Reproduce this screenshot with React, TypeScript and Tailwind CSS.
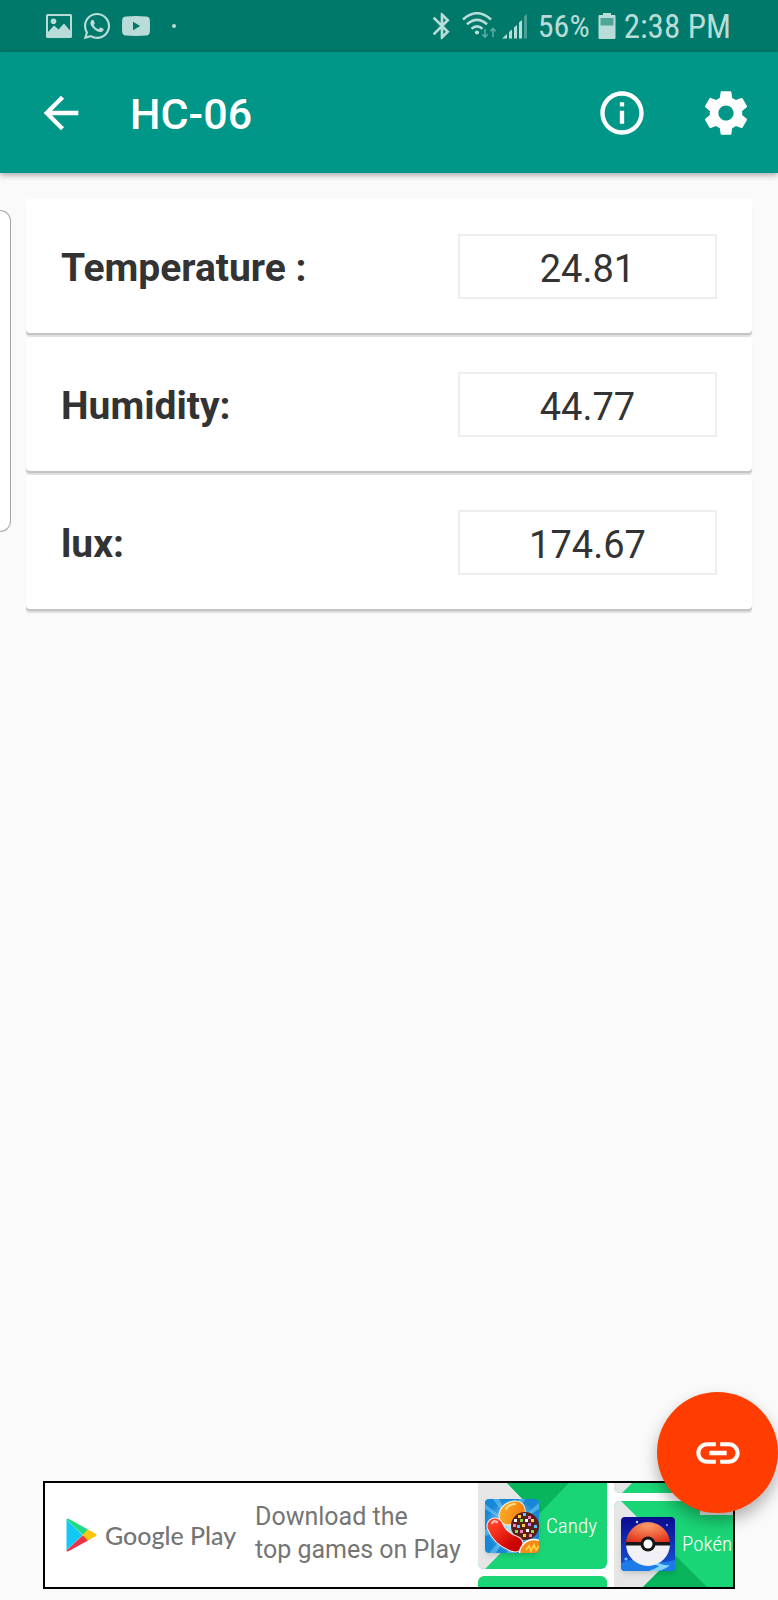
import React from "react";
import { MdArrowBack, MdBluetooth, MdInfoOutline, MdLink } from "react-icons/md";
import { FaWhatsapp } from "react-icons/fa";

const readings = [
  { id: "temperature", label: "Temperature :", value: "24.81" },
  { id: "humidity", label: "Humidity:", value: "44.77" },
  { id: "lux", label: "lux:", value: "174.67" },
];

function PhotoIcon() {
  return (
    <svg width="26" height="24" viewBox="0 0 26 24" fill="currentColor">
      <path
        fillRule="evenodd"
        d="M1.5 0h23A1.5 1.5 0 0 1 26 1.500v21a1.500 1.500 0 0 1-1.500 1.500h-23A1.500 1.500 0 0 1 0 22.500v-21A1.500 1.500 0 0 1 1.500 0zM2 2v16l6-6.500 4.500 4 5.500-6 6 7V2z"
      />
      <circle cx="7.500" cy="7.200" r="2.800" />
    </svg>
  );
}

function VideoIcon() {
  return (
    <svg width="28" height="20" viewBox="0 0 28 20" fill="currentColor">
      <path
        fillRule="evenodd"
        d="M4 .4Q14-.4 24 .4q3.600.2 3.800 3.600.4 6 0 12-.2 3.400-3.800 3.600-10 .8-20 0Q.4 19.400.2 16q-.4-6 0-12Q.4.600 4 .4zM11 5.800v8.400l7.200-4.200z"
      />
    </svg>
  );
}

function WifiIcon() {
  return (
    <svg width="36" height="28" viewBox="0 0 36 28" fill="none" stroke="currentColor">
      <g strokeWidth="2.600">
        <path d="M1 7.500Q15-5 29 7.500" />
        <path d="M5 12.300Q15 3.500 25 12.300" />
        <path d="M9.500 16.800Q15 12 20.500 16.800" />
      </g>
      <circle cx="15" cy="20.500" r="2.100" fill="currentColor" stroke="none" />
      <g strokeWidth="1.600" opacity=".5">
        <path d="M23 17v8M20.300 22.300l2.700 2.900 2.700-2.900" />
        <path d="M31 25v-8.500M28.300 19.200l2.700-2.900 2.700 2.900" />
      </g>
    </svg>
  );
}

function SignalIcon() {
  return (
    <svg width="26" height="26" viewBox="0 0 26 26" fill="currentColor">
      <path d="M0 25.500l5-4.500v4.500z" />
      <path d="M7 19l3-2.500v9H7z" />
      <path d="M12 14.500l3-2.500v13.500h-3z" />
      <path d="M17 9.500l3-2.500v18.500h-3z" />
      <path opacity=".4" d="M22 3.500L25 .8v24.700h-3z" />
    </svg>
  );
}

function BatteryIcon() {
  return (
    <svg width="18" height="26" viewBox="0 0 18 26" fill="currentColor">
      <path d="M5 0h8v2h3.500q1 0 1 1v22q0 1-1 1h-15q-1 0-1-1V3q0-1 1-1H5z" />
      <path d="M2.500 5h13v7.500h-13z" fill="#4fa598" />
    </svg>
  );
}

function GearIcon() {
  return (
    <svg width="52" height="52" viewBox="0 0 24 24" fill="currentColor">
      <path d="M19.43 12.98c.04-.32.07-.64.07-.98s-.03-.66-.07-.98l2.11-1.65c.19-.15.24-.42.12-.64l-2-3.46c-.12-.22-.39-.3-.61-.22l-2.49 1c-.52-.4-1.08-.73-1.69-.98l-.38-2.65C14.46 2.18 14.25 2 14 2h-4c-.25 0-.46.18-.49.42l-.38 2.65c-.61.25-1.17.59-1.69.98l-2.49-1c-.23-.09-.49 0-.61.22l-2 3.46c-.13.22-.07.49.12.64l2.110 1.650c-.04.32-.07.65-.07.98s.03.66.07.98l-2.110 1.650c-.19.15-.24.42-.12.64l2 3.460c.12.22.39.3.61.22l2.490-1c.52.4 1.080.73 1.690.98l.38 2.650c.03.24.24.42.49.42h4c.25 0 .46-.18.49-.42l.38-2.650c.61-.25 1.170-.59 1.690-.98l2.490 1c.23.09.49 0 .61-.22l2-3.460c.12-.22.07-.49-.12-.64l-2.110-1.650zM12 15.500c-1.930 0-3.500-1.570-3.500-3.500s1.570-3.500 3.500-3.500 3.500 1.570 3.500 3.500-1.570 3.500-3.500 3.500z" />
    </svg>
  );
}

function PlayLogo() {
  return (
    <svg width="31" height="34" viewBox="0 0 31 34" className="shrink-0">
      <path d="M.5 1.500v31L16.500 17z" fill="#12c8f5" />
      <path d="M.5 1.500Q1 0 3 1l19 10.500L17 17z" fill="#1edb82" />
      <path d="M.5 32.500Q1 34 3 33l19-10.500L17 17z" fill="#ef3347" />
      <path d="M22 11.500l8 4.500q1 1 0 2l-8 4.500-5.500-5.500z" fill="#fdc50e" />
    </svg>
  );
}

const sprinkles: [number, number, string][] = [
  [34, 17, "#ffd23f"], [39, 15, "#5cc8ff"], [44, 18, "#ff7ac0"], [30, 21, "#ffffff"],
  [36, 21, "#7ee04a"], [41, 21, "#ffffff"], [47, 21, "#ffd23f"], [29, 26, "#ff7ac0"],
  [33, 27, "#5cc8ff"], [38, 26, "#ffd23f"], [44, 25, "#c77dff"], [50, 27, "#5cc8ff"],
  [31, 32, "#7ee04a"], [36, 32, "#ff7ac0"], [42, 31, "#ffffff"], [47, 32, "#7ee04a"],
  [39, 36, "#ffd23f"], [45, 36, "#ff7ac0"],
];

function CandyIcon() {
  return (
    <svg width="54" height="54" viewBox="0 0 54 54" className="shrink-0 rounded-sm shadow-md">
      <defs>
        <radialGradient id="candy-sky">
          <stop offset="0" stopColor="#c9f2ff" />
          <stop offset="1" stopColor="#1687d6" />
        </radialGradient>
        <linearGradient id="candy-orange" x2="1" y2="1">
          <stop offset="0" stopColor="#ffb52e" />
          <stop offset="1" stopColor="#ef7205" />
        </linearGradient>
        <linearGradient id="candy-red" x2="1" y2="1">
          <stop offset="0" stopColor="#ff3b24" />
          <stop offset="1" stopColor="#c90000" />
        </linearGradient>
      </defs>
      <path d="M0 0h54v54H0z" fill="url(#candy-sky)" />
      <path
        d="M27 27L8 0h6zM27 27L34 0h6zM27 27L54 4v6zM27 27L0 30v7zM27 27L4 54h7zM27 27L0 10V5zM27 27L22 54h7z"
        fill="#7fd3f7"
        opacity=".5"
      />
      <ellipse cx="27" cy="14" rx="14" ry="11" transform="rotate(-35 27 14)" fill="url(#candy-orange)" stroke="#fff3df" strokeWidth="1" />
      <path d="M21 10q3-5 9-5" stroke="#ffe08a" strokeWidth="2" fill="none" strokeLinecap="round" />
      <circle cx="40" cy="27" r="14" fill="#5a1f17" />
      {sprinkles.map(([x, y, fill]) => (
        <rect key={`${x}-${y}`} x={x - 1} y={y - 1} width="3" height="3" fill={fill} />
      ))}
      <path d="M10 27q5 13 20 18" stroke="#ffe9e4" strokeWidth="17" fill="none" strokeLinecap="round" />
      <path d="M10 27q5 13 20 18" stroke="url(#candy-red)" strokeWidth="15" fill="none" strokeLinecap="round" />
      <path d="M7 24q2-3 5-1" stroke="#ffb3a6" strokeWidth="2.500" fill="none" strokeLinecap="round" />
      <circle cx="49" cy="55" r="14.500" fill="#f58a16" stroke="#fff" strokeWidth="1.500" />
      <path d="M41 51l3-4 2 5 3-6 2 5 3-4" stroke="#ffd23f" strokeWidth="1.800" fill="none" />
    </svg>
  );
}

function PokeballIcon() {
  return (
    <svg width="54" height="54" viewBox="0 0 54 54" className="shrink-0 rounded-sm shadow-md">
      <defs>
        <linearGradient id="ball-night" x2="0" y2="1">
          <stop offset="0" stopColor="#0a0a8f" />
          <stop offset="1" stopColor="#1658d8" />
        </linearGradient>
        <radialGradient id="ball-top" cx=".5" cy=".15" r=".9">
          <stop offset="0" stopColor="#ff9d6b" />
          <stop offset="1" stopColor="#dc2a12" />
        </radialGradient>
      </defs>
      <path d="M0 0h54v54H0z" fill="url(#ball-night)" />
      <path d="M0 46q12-6 24-2t30-1v11H0z" fill="#1c7be6" />
      <path d="M28 46q8-1 12 1 6 2 9 1-4 4-12 6h-9q8-3 10-5z" fill="#86d4fb" />
      <path d="M5 27a22 22 0 0 1 44 0z" fill="url(#ball-top)" />
      <path d="M5 27a22 22 0 0 0 44 0z" fill="#f1f1f5" />
      <path d="M5 25h44v3.500H5z" fill="#161616" />
      <circle cx="27" cy="27" r="7.500" fill="#161616" />
      <circle cx="27" cy="27" r="4.500" fill="#fff" />
      <circle cx="16" cy="5" r="1.200" fill="#bcd6ff" />
      <circle cx="5" cy="42" r="1.600" fill="#6cc6ff" />
      <circle cx="46" cy="8" r=".9" fill="#9cc0ff" />
    </svg>
  );
}

function StatusBar() {
  return (
    <div className="flex h-[52px] items-center bg-[#00796b] pr-[47px] pl-[46px] text-[#b9dcd8]">
      <div className="flex items-center gap-[10px]">
        <PhotoIcon />
        <FaWhatsapp size={30} />
        <VideoIcon />
        <span className="ml-3 size-1 rounded-full bg-current" />
      </div>
      <div className="ml-auto flex items-center">
        <MdBluetooth size={32} />
        <div className="ml-1 flex items-center gap-1">
          <WifiIcon />
          <SignalIcon />
        </div>
        <span className="ml-[10px] font-['Roboto_Condensed','Liberation_Sans_Narrow',Roboto,sans-serif] text-[32px] leading-none">
          56%
        </span>
        <span className="mx-2">
          <BatteryIcon />
        </span>
        <span className="font-['Roboto_Condensed','Liberation_Sans_Narrow',Roboto,sans-serif] text-[33px] leading-none">
          2:38 PM
        </span>
      </div>
    </div>
  );
}

function AppBar() {
  return (
    <header className="z-10 flex h-[121px] items-center bg-[#009688] pr-[26px] pl-[35px] text-white shadow-[0_2px_6px_rgba(0,0,0,0.35)]">
      <button type="button" aria-label="Back">
        <MdArrowBack size={52} />
      </button>
      <h1 className="ml-[43px] pt-1 text-[43px] leading-none font-medium">HC-06</h1>
      <div className="ml-auto flex gap-[52px]">
        <button type="button" aria-label="Information">
          <MdInfoOutline size={52} />
        </button>
        <button type="button" aria-label="Settings">
          <GearIcon />
        </button>
      </div>
    </header>
  );
}

function AdBanner() {
  return (
    <a
      href="#play"
      className="mx-[43px] mb-[11px] flex h-[108px] items-center overflow-hidden border-2 border-black bg-white pl-[21px] text-[#757575]"
    >
      <span className="flex w-[189px] shrink-0 items-center gap-2">
        <PlayLogo />
        <span className="font-[Lato,sans-serif] text-[25px] leading-none font-medium whitespace-nowrap">Google Play</span>
      </span>
      <span className="w-[223px] shrink-0 pb-1 text-[25px] leading-[33px]">
        Download the
        <br />
        top games on Play
      </span>
      <span className="flex flex-1 gap-[7px] self-stretch overflow-hidden font-['Roboto_Condensed',Roboto,sans-serif] text-[21px] leading-none font-light text-white">
        <span className="flex w-[129px] shrink-0 flex-col gap-[7px]">
          <span className="relative flex h-[86px] shrink-0 items-center gap-[7px] overflow-hidden rounded-b-md bg-[#1ad576] pl-[7px]">
            <svg width="130" height="86" viewBox="0 0 130 86" className="absolute inset-0">
              <path d="M0 0h29l31 32L7 86H0z" fill="#e6e6e6" />
              <path d="M29 0h62L60 32z" fill="#08b45c" />
            </svg>
            <span className="relative">
              <CandyIcon />
            </span>
            <span className="relative">Candy</span>
          </span>
          <span className="h-4 rounded-t-md bg-[#1ad576]" />
        </span>
        <span className="flex min-w-0 flex-1 flex-col gap-2">
          <span className="relative h-[10px] overflow-hidden rounded-bl-md bg-[#1ad576]">
            <svg width="20" height="10" viewBox="0 0 20 10" className="absolute inset-0">
              <path d="M0 0h18L8 10H0z" fill="#e6e6e6" />
            </svg>
          </span>
          <span className="relative flex h-[86px] shrink-0 items-center gap-[7px] overflow-hidden rounded-tl-md bg-[#1ad576] pl-[7px]">
            <svg width="130" height="86" viewBox="0 0 130 86" className="absolute inset-0">
              <path d="M0 0h7l54 54-32 32H0z" fill="#e6e6e6" />
              <path d="M61 54l32 32H29z" fill="#08b45c" />
              <path d="M86 9h33v5H86z" fill="#e6e6e6" />
            </svg>
            <span className="relative">
              <PokeballIcon />
            </span>
            <span className="relative">Pokén</span>
          </span>
        </span>
      </span>
    </a>
  );
}

export default function App() {
  return (
    <div className="relative flex min-h-screen flex-col overflow-hidden bg-[#fafafa] font-[Roboto,sans-serif]">
      <StatusBar />
      <AppBar />
      <main className="relative flex-1 px-[26px] pt-[26px]">
        <div className="absolute top-[37px] left-0 h-[322px] w-[11px] rounded-r-xl border border-l-0 border-[#a8a8a8] bg-white" />
        <div className="flex flex-col gap-1">
          {readings.map((r) => (
            <section
              key={r.id}
              className="flex items-center justify-between rounded-[4px] bg-white px-[35px] pt-[35px] pb-[34px] shadow-[0_2px_0_#c4c4c4,0_4px_1px_#dedede]"
            >
              <label htmlFor={r.id} className="pt-1 text-[39px] leading-none font-bold text-[#333333]">
                {r.label}
              </label>
              <output
                id={r.id}
                className="flex h-[65px] w-[259px] items-center justify-center border-2 border-[#eeeeee] pt-1 text-[38px] leading-none text-[#333333]"
              >
                {r.value}
              </output>
            </section>
          ))}
        </div>
      </main>
      <AdBanner />
      <button
        type="button"
        aria-label="Connect"
        className="absolute right-0 bottom-[87px] flex size-[121px] items-center justify-center rounded-full bg-[#ff3d00] text-white shadow-[0_8px_16px_rgba(0,0,0,0.3)]"
      >
        <MdLink size={52} />
      </button>
    </div>
  );
}
